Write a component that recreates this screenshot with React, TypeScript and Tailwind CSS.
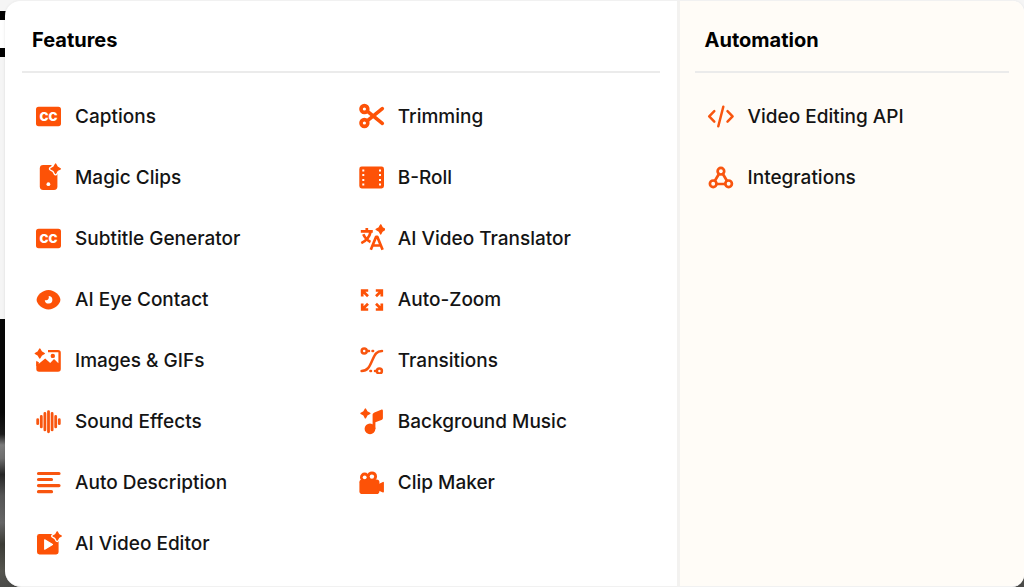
import type { ReactNode } from "react";

type Item = { label: string; icon: ReactNode };

function Icon({ children }: { children: ReactNode }) {
  return (
    <svg
      viewBox="0 0 28 28"
      className="size-7 shrink-0"
      fill="none"
      strokeLinecap="round"
      strokeLinejoin="round"
      aria-hidden="true"
    >
      {children}
    </svg>
  );
}

const ORANGE = "#fd5207";

/* Four-pointed star, optionally with a white halo that cuts it out of the shape below. */
function Sparkle({ x, y, r, halo = 0 }: { x: number; y: number; r: number; halo?: number }) {
  const k = r * 0.36;
  const d =
    `M${x} ${y - r}L${x + k} ${y - k}L${x + r} ${y}L${x + k} ${y + k}` +
    `L${x} ${y + r}L${x - k} ${y + k}L${x - r} ${y}L${x - k} ${y - k}Z`;
  return (
    <>
      {halo > 0 && <path d={d} fill="#fff" stroke="#fff" strokeWidth={halo} />}
      <path d={d} fill={ORANGE} stroke={ORANGE} strokeWidth={1.4} />
    </>
  );
}

const captions = (
  <Icon>
    <rect x="2" y="4.8" width="25" height="19.4" rx="2.6" fill={ORANGE} />
    <text x="14.5" y="18.8" textAnchor="middle" fontSize="12" fontWeight="900" fill="#fff">
      CC
    </text>
  </Icon>
);

const features: Item[] = [
  { label: "Captions", icon: captions },
  {
    label: "Magic Clips",
    icon: (
      <Icon>
        <rect x="5.8" y="2" width="17.6" height="25" rx="3.4" fill={ORANGE} />
        <path d="M17.5 0h8v5.5h-8z" fill="#fff" />
        <Sparkle x={21.6} y={5.8} r={4.7} halo={4} />
        <circle cx="14.4" cy="21.2" r="1.9" fill="#fff" />
      </Icon>
    ),
  },
  { label: "Subtitle Generator", icon: captions },
  {
    label: "AI Eye Contact",
    icon: (
      <Icon>
        <path
          d="M14.5 5C8.5 5 2.6 10.6 2.6 14.8S8.5 24.6 14.5 24.6 26.4 19 26.4 14.8 20.5 5 14.5 5Z"
          fill={ORANGE}
        />
        <path d="M14.6 11a3.8 3.8 0 1 1-3.8 4.2c1.3.3 2.7-.1 3.4-1 .7-.9.8-2.1.4-3.2Z" fill="#fff" />
      </Icon>
    ),
  },
  {
    label: "Images & GIFs",
    icon: (
      <Icon>
        <rect x="2.3" y="4" width="24.5" height="21.8" rx="2.8" fill={ORANGE} />
        <path d="M2 3.5h12v2.7h10.4v11l-4.4-4.2-3.8 4-5-4.6L4.5 18 2 15.5Z" fill="#fff" />
        <path d="M2.3 14.8 5 16.5 4 20H2.3Z" fill={ORANGE} />
        <circle cx="18.8" cy="9.9" r="2.2" fill={ORANGE} />
        <Sparkle x={5.8} y={7.5} r={4.5} halo={2} />
      </Icon>
    ),
  },
  {
    label: "Sound Effects",
    icon: (
      <Icon>
        <path
          d="M3.7 12.7v4M7.3 9.5v10.4M10.9 6.5v16.4M14.5 4.6v20.2M18.1 6.5v16.4M21.7 9.5v10.4M25.3 12.7v4"
          stroke="#f8550f"
          strokeWidth="2.8"
        />
      </Icon>
    ),
  },
  {
    label: "Auto Description",
    icon: (
      <Icon>
        <path d="M4.5 5.5h20.5M4.5 11.5h13M4.5 17.6h20.5M4.5 23.7h13" stroke="#f8550f" strokeWidth="3.2" />
      </Icon>
    ),
  },
  {
    label: "AI Video Editor",
    icon: (
      <Icon>
        <rect x="3" y="5" width="21.6" height="20.4" rx="2.4" fill={ORANGE} />
        <path d="M20 3h6v4h-6z" fill="#fff" />
        <Sparkle x={23.2} y={7} r={4.1} halo={4} />
        <path d="M10.7 10.8v9.4l7.8-4.7Z" fill="#fff" stroke="#fff" strokeWidth="1.2" />
      </Icon>
    ),
  },
];

const moreFeatures: Item[] = [
  {
    label: "Trimming",
    icon: (
      <Icon>
        <g stroke={ORANGE} strokeWidth="3.6">
          <circle cx="7.4" cy="7" r="3.4" />
          <circle cx="7.4" cy="21" r="3.4" />
          <path d="m10.5 9.3 14.8 12M10.5 18.7l14.8-12" />
        </g>
      </Icon>
    ),
  },
  {
    label: "B-Roll",
    icon: (
      <Icon>
        <rect x="2.3" y="3.6" width="24.7" height="21.8" rx="2.4" fill={ORANGE} />
        <path
          d="M5.3 6.4h2v2h-2zM5.3 11.1h2v2h-2zM5.3 15.9h2v2h-2zM5.3 20.6h2v2h-2zM22 6.4h2v2h-2zM22 11.1h2v2h-2zM22 15.9h2v2h-2zM22 20.6h2v2h-2z"
          fill="#fff"
        />
      </Icon>
    ),
  },
  {
    label: "AI Video Translator",
    icon: (
      <Icon>
        <g stroke={ORANGE} strokeWidth="2.7" strokeLinecap="butt">
          <path d="M3.8 7.3h12M9.8 4v3.2M13.7 7.5c-1 4.8-4.5 9.3-9.4 11.6M6.3 10.3c1.5 3.4 4 6.1 7.2 7.7" />
          <path d="m13.8 25.7 5.3-12.9h1.2l5.3 12.9M15.5 21.5h8.4" />
        </g>
        <Sparkle x={23.7} y={5.4} r={4.5} />
      </Icon>
    ),
  },
  {
    label: "Auto-Zoom",
    icon: (
      <Icon>
        <path
          d="M5.2 11.5V5.5h6M5.5 5.8l5.5 5.5M18.8 5.5h6v6M24.5 5.8 19 11.3M5.2 18.5v6h6M5.5 24.2l5.5-5.5M18.8 24.5h6v-6M24.5 24.2l-5.5-5.5"
          stroke={ORANGE}
          strokeWidth="2.7"
          strokeLinecap="butt"
          strokeLinejoin="miter"
        />
      </Icon>
    ),
  },
  {
    label: "Transitions",
    icon: (
      <Icon>
        <g stroke="#f8550f" strokeWidth="2.5">
          <circle cx="7.2" cy="5" r="2.5" />
          <circle cx="22.4" cy="25" r="2.5" />
          <path d="M10.5 5h1.5M15.5 5h.6M19.5 25h-1.5M14 25h-.6" />
          <path d="M25 5c-5.5 0-7 3.2-9.7 9.2C12.4 21 10.5 25 4.6 25" />
        </g>
      </Icon>
    ),
  },
  {
    label: "Background Music",
    icon: (
      <Icon>
        <circle cx="13" cy="21.8" r="5.4" fill={ORANGE} />
        <path
          d="M15.6 22V7.8c0-1 .8-1.9 1.8-2.3l6.8-2.8c.9-.3 1.7.2 1.7 1.1v7.2c0 .9-.6 1.7-1.5 2l-6 2.3v6.7Z"
          fill={ORANGE}
        />
        <Sparkle x={8.4} y={6.4} r={4.4} />
      </Icon>
    ),
  },
  {
    label: "Clip Maker",
    icon: (
      <Icon>
        <circle cx="7.6" cy="9.2" r="4.6" fill={ORANGE} />
        <circle cx="15" cy="8.4" r="5" fill={ORANGE} />
        <rect x="2.4" y="11.5" width="20" height="14.5" rx="2.8" fill={ORANGE} />
        <path d="M21 17.2 26.2 14.6v9.2L21 21.5Z" fill={ORANGE} stroke={ORANGE} strokeWidth="1.4" />
        <circle cx="7.7" cy="9.3" r="1.9" fill="#fff" />
        <circle cx="14.9" cy="8.6" r="2.2" fill="#fff" />
      </Icon>
    ),
  },
];

const automation: Item[] = [
  {
    label: "Video Editing API",
    icon: (
      <Icon>
        <path
          d="M7.3 9.2 2.2 14.4l5.1 5.2M16.3 4.7l-5 19.5M20.5 9.2l5.1 5.2-5.1 5.2"
          stroke="#f8550f"
          strokeWidth="2.5"
        />
      </Icon>
    ),
  },
  {
    label: "Integrations",
    icon: (
      <Icon>
        <g stroke="#f8550f" strokeWidth="2.7">
          <circle cx="13.9" cy="8.2" r="3.3" />
          <circle cx="6.2" cy="20.8" r="3.3" />
          <circle cx="21.6" cy="20.8" r="3.3" />
          <path d="m11.9 11-4 6.7M15.9 11l4 6.7M9.7 21h8.4" />
        </g>
      </Icon>
    ),
  },
];

function Heading({ children }: { children: ReactNode }) {
  return (
    <h2 className="flex h-18 items-center border-b-2 border-[#ebebeb] px-[10px] pt-2 text-xl font-bold text-black">
      {children}
    </h2>
  );
}

function Links({ items }: { items: Item[] }) {
  return (
    <ul>
      {items.map((item) => (
        <li key={item.label}>
          <a
            href="#"
            className="flex items-center gap-[13px] px-3 pt-[15px] pb-4 text-[19px] leading-7 font-medium text-[#141414]"
          >
            {item.icon}
            <span className="pt-0.5">{item.label}</span>
          </a>
        </li>
      ))}
    </ul>
  );
}

export default function App() {
  return (
    <div className="relative min-h-screen bg-[#f5f5f5] pl-[5px] font-[Inter,sans-serif]">
      <div className="absolute inset-0 flex flex-col" aria-hidden="true">
        <div className="mt-[11px] h-[46px] border-y-[9px] border-black bg-white" />
        <div className="mt-[262px] grow bg-[linear-gradient(#080808_35%,#1c1c1c_43%,#7c7c7c_47%,#6e6e6e_52%,#262626_58%,#555_66%,#666_76%,#3c3c36_84%,#55554f_94%,#4b4b49)]" />
      </div>
      <nav className="relative flex min-h-screen overflow-hidden rounded-l-2xl rounded-r-xl border-y border-[#f1f1f1] bg-white shadow-sm">
        <section className="grow px-[17px] pb-3">
          <Heading>Features</Heading>
          <div className="grid grid-cols-2 gap-x-2 pt-[13px]">
            <Links items={features} />
            <Links items={moreFeatures} />
          </div>
        </section>
        <section className="w-[34.1%] border-l-3 border-[#f3f2f0] bg-[#fffcf7] px-[15px] pb-3">
          <Heading>Automation</Heading>
          <div className="pt-[13px]">
            <Links items={automation} />
          </div>
        </section>
      </nav>
    </div>
  );
}
